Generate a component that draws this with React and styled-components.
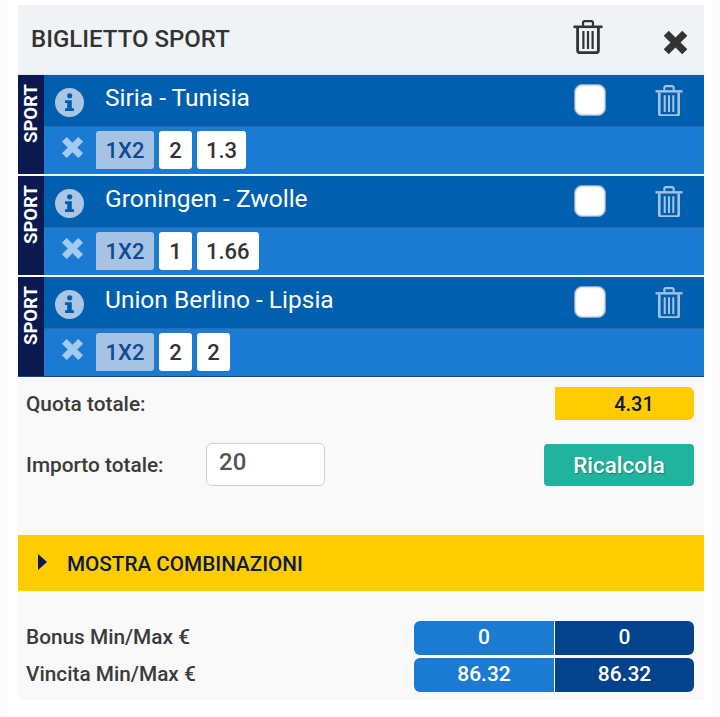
import React from 'react';
import styled, { createGlobalStyle } from 'styled-components';

const GlobalStyle = createGlobalStyle`
  html, body {
    margin: 0;
    padding: 0;
    background: #fff;
    font-family: Roboto, "Liberation Sans", sans-serif;
  }
`;

const events = [
  { name: 'Siria - Tunisia', sign: '2', odd: '1.3' },
  { name: 'Groningen - Zwolle', sign: '1', odd: '1.66' },
  { name: 'Union Berlino - Lipsia', sign: '2', odd: '2' },
];

const TrashIcon = ({ size = 30, color }) => (
  <svg width={size} height={size * 34 / 30} viewBox="0 0 30 34" fill="none" stroke={color} strokeWidth="2.2">
    <path d="M0.500 6.800h29" strokeWidth="2.600" />
    <path d="M10 6V3a1.800 1.800 0 0 1 1.800-1.800h6.400A1.800 1.800 0 0 1 20 3v3" />
    <path d="M4.600 8v22.500a2.200 2.200 0 0 0 2.200 2.200h16.400a2.200 2.200 0 0 0 2.200-2.200V8" strokeWidth="2.800" />
    <path d="M10.400 11v18M15 11v18M19.600 11v18" />
  </svg>
);

const CrossIcon = ({ size, color, weight = 1 }) => (
  <svg width={size} height={size} viewBox="0 0 24 24">
    <path d="M6 1.500 12 7.500 18 1.500 22.500 6 16.500 12 22.500 18 18 22.500 12 16.500 6 22.500 1.500 18 7.500 12 1.500 6Z" fill={color} stroke={color} strokeWidth={weight} strokeLinejoin="round" />
  </svg>
);

const InfoIcon = () => (
  <svg width="29" height="29" viewBox="0 0 29 29">
    <circle cx="14.500" cy="14.500" r="14.500" fill="#abc5e4" />
    <circle cx="14.700" cy="7.800" r="2.600" fill="#005faf" />
    <path d="M10 12.300h6.800v7.900h2.200v2.800h-9v-2.800h2.200v-5.100h-2.200z" fill="#005faf" />
  </svg>
);

export default function App() {
  return (
    <>
      <GlobalStyle />
      <Page>
        <Panel>
          <Header>
            <Title>BIGLIETTO SPORT</Title>
            <HeaderTrash><TrashIcon size={30} color="#333" /></HeaderTrash>
            <HeaderClose><CrossIcon size={27} color="#333" weight={0} /></HeaderClose>
          </Header>

          {events.map(ev => (
            <Event key={ev.name}>
              <SideTab><SideLabel>SPORT</SideLabel></SideTab>
              <EventBody>
                <TopRow>
                  <InfoSlot><InfoIcon /></InfoSlot>
                  <EventName>{ev.name}</EventName>
                  <Check />
                  <RowTrash><TrashIcon size={28} color="#a5c2e4" /></RowTrash>
                </TopRow>
                <BottomRow>
                  <RemoveSlot><CrossIcon size={23} color="#a3cbef" /></RemoveSlot>
                  <MarketChip>1X2</MarketChip>
                  <Chip>{ev.sign}</Chip>
                  <Chip>{ev.odd}</Chip>
                </BottomRow>
              </EventBody>
            </Event>
          ))}

          <Totals>
            <QuotaRow>
              <Label>Quota totale:</Label>
              <QuotaBox>4.31</QuotaBox>
            </QuotaRow>
            <AmountRow>
              <AmountLabel>Importo totale:</AmountLabel>
              <AmountInput defaultValue="20" />
              <RecalcButton>Ricalcola</RecalcButton>
            </AmountRow>
          </Totals>

          <CombiBar>
            <Caret />
            <CombiText>MOSTRA COMBINAZIONI</CombiText>
          </CombiBar>

          <Summary>
            <SummaryRow>
              <SummaryLabel>Bonus Min/Max €</SummaryLabel>
              <Values>
                <MinValue>0</MinValue>
                <MaxValue>0</MaxValue>
              </Values>
            </SummaryRow>
            <SummaryRow>
              <SummaryLabel>Vincita Min/Max €</SummaryLabel>
              <Values>
                <MinValue>86.32</MinValue>
                <MaxValue>86.32</MaxValue>
              </Values>
            </SummaryRow>
          </Summary>
        </Panel>
      </Page>
    </>
  );
}

const Page = styled.div`
  width: 720px;
  height: 717px;
  box-sizing: border-box;
  padding: 5px 16px 17px 18px;
  overflow: hidden;
  background: linear-gradient(90deg, #fcfcfc 8px, #fff 8px, #fff 712px, #fcfcfc 712px);
`;

const Panel = styled.div`
  width: 686px;
  background: #f9f9f9;
`;

const Header = styled.div`
  height: 69px;
  display: flex;
  align-items: center;
  background: #f0f3f6;
  border-bottom: 1px solid #dfe5ea;
`;

const Title = styled.div`
  flex: 1;
  margin: 0 0 2px 13px;
  font-size: 24px;
  font-weight: 500;
  color: #333;
`;

const HeaderTrash = styled.div`
  display: flex;
  margin: 0 59px 6px 0;
`;

const HeaderClose = styled.div`
  display: flex;
  margin: 5px 15px 0 0;
`;

const Event = styled.div`
  height: 99px;
  display: flex;
  border-bottom: 2px solid #fff;
`;

const SideTab = styled.div`
  width: 26px;
  background: #0a1a4f;
  display: flex;
  justify-content: center;
`;

const SideLabel = styled.div`
  writing-mode: vertical-rl;
  transform: rotate(180deg);
  height: 60px;
  margin-top: 8px;
  text-align: left;
  font-size: 18.500px;
  font-weight: 700;
  line-height: 26px;
  color: #fff;
`;

const EventBody = styled.div`
  flex: 1;
  display: flex;
  flex-direction: column;
`;

const TopRow = styled.div`
  height: 51px;
  display: flex;
  align-items: center;
  background: #005faf;
  border-bottom: 1px solid #2b68ae;
`;

const InfoSlot = styled.div`
  width: 61px;
  padding: 3px 0 0 11px;
  box-sizing: border-box;
  display: flex;
`;

const EventName = styled.div`
  flex: 1;
  margin-bottom: 7px;
  font-size: 24.500px;
  color: #fff;
`;

const Check = styled.div`
  width: 30px;
  height: 30px;
  margin-bottom: 1px;
  border-radius: 8px;
  background: #fff;
  box-shadow: inset 0 0 2px #8a8a8a;
  border: 1px solid #7fa6d0;
`;

const RowTrash = styled.div`
  display: flex;
  margin: 0 21px 0 49px;
`;

const BottomRow = styled.div`
  flex: 1;
  display: flex;
  align-items: flex-start;
  gap: 5px;
  padding-top: 4px;
  background: #1b7bd2;
`;

const RemoveSlot = styled.div`
  width: 47px;
  padding: 5px 0 0 17px;
  box-sizing: border-box;
  display: flex;
`;

const MarketChip = styled.div`
  width: 58px;
  height: 38px;
  display: flex;
  align-items: center;
  justify-content: center;
  border-radius: 3px 3px 3px 0;
  background: #a6c3e3;
  color: #0f4a94;
  font-size: 22px;
  font-weight: 500;
`;

const Chip = styled.div`
  min-width: 33px;
  height: 38px;
  padding: 0 9px;
  box-sizing: border-box;
  display: flex;
  align-items: center;
  justify-content: center;
  border-radius: 3px;
  background: #fff;
  color: #333;
  font-size: 22px;
  font-weight: 500;
`;

/* sits over the white rule of the last event */
const Totals = styled.div`
  height: 159px;
  margin-top: -2px;
  border-top: 1px solid #0f4a94;
  box-sizing: border-box;
  background: #f9f9f9;
`;

const QuotaRow = styled.div`
  display: flex;
  align-items: center;
  justify-content: space-between;
  padding: 10px 10px 0 9px;
`;

const Label = styled.div`
  margin: 1px 0 0 -1px;
  font-size: 20.800px;
  font-weight: 500;
  color: #3b3b3b;
`;

const QuotaBox = styled.div`
  width: 139px;
  height: 33px;
  display: flex;
  align-items: center;
  justify-content: center;
  box-sizing: border-box;
  padding-left: 19px;
  border-radius: 0 6px 6px 0;
  background: #ffcc00;
  color: #0a1a4f;
  font-size: 20px;
  font-weight: 500;
`;

const AmountRow = styled.div`
  display: flex;
  align-items: center;
  margin-top: 23px;
  padding: 0 10px 0 9px;
`;

const AmountLabel = styled(Label)`
  width: 180px;
  margin-top: 0;
`;

const AmountInput = styled.input`
  width: 119px;
  height: 43px;
  box-sizing: border-box;
  padding: 0 0 6px 12px;
  border: 1px solid #cfcfcf;
  border-radius: 6px;
  background: #fff;
  color: #555;
  font-family: inherit;
  font-size: 24px;
  font-weight: 500;
  outline: none;
`;

const RecalcButton = styled.button`
  width: 150px;
  height: 42px;
  margin-left: auto;
  border: none;
  border-radius: 4px;
  background: #20b39e;
  color: #fff;
  font-family: inherit;
  font-size: 22.400px;
  font-weight: 500;
  text-shadow: 1px 1px 1px #17806f;
`;

const CombiBar = styled.div`
  height: 56px;
  display: flex;
  align-items: center;
  background: #ffcc00;
`;

const Caret = styled.div`
  width: 0;
  height: 0;
  margin: 0 0 2px 20px;
  border-left: 9px solid #0a1a4f;
  border-top: 8px solid transparent;
  border-bottom: 8px solid transparent;
`;

const CombiText = styled.div`
  margin: 2px 0 0 20px;
  font-size: 20.700px;
  font-weight: 500;
  color: #0a1a4f;
`;

const Summary = styled.div`
  display: flex;
  flex-direction: column;
  gap: 3px;
  height: 109px;
  box-sizing: border-box;
  padding: 30px 10px 0 9px;
`;

const SummaryRow = styled.div`
  display: flex;
  align-items: center;
  justify-content: space-between;
`;

const SummaryLabel = styled.div`
  margin: 0 0 3px -1px;
  font-size: 20.800px;
  font-weight: 500;
  color: #3b3b3b;
`;

const Values = styled.div`
  display: flex;
  gap: 1px;
`;

const MinValue = styled.div`
  width: 140px;
  height: 34px;
  box-sizing: border-box;
  padding-bottom: 2px;
  display: flex;
  align-items: center;
  justify-content: center;
  border-radius: 6px 0 0 6px;
  background: #1b7bd2;
  color: #fff;
  font-size: 21px;
  font-weight: 500;
`;

const MaxValue = styled(MinValue)`
  width: 139px;
  border-radius: 0 6px 6px 0;
  background: #03428c;
`;
